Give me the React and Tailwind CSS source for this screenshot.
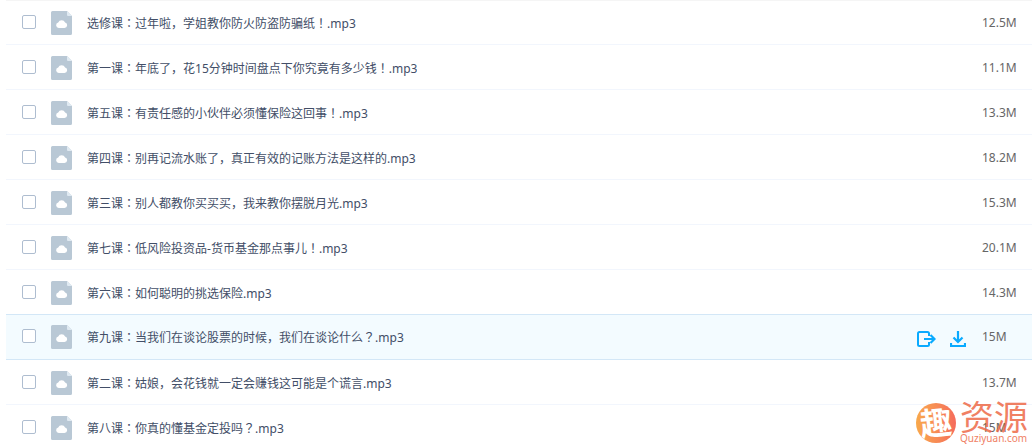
import React, { useState } from "react";

const files = [
  { name: "选修课：过年啦，学姐教你防火防盗防骗纸！.mp3", size: "12.5M" },
  { name: "第一课：年底了，花15分钟时间盘点下你究竟有多少钱！.mp3", size: "11.1M" },
  { name: "第五课：有责任感的小伙伴必须懂保险这回事！.mp3", size: "13.3M" },
  { name: "第四课：别再记流水账了，真正有效的记账方法是这样的.mp3", size: "18.2M" },
  { name: "第三课：别人都教你买买买，我来教你摆脱月光.mp3", size: "15.3M" },
  { name: "第七课：低风险投资品-货币基金那点事儿！.mp3", size: "20.1M" },
  { name: "第六课：如何聪明的挑选保险.mp3", size: "14.3M" },
  { name: "第九课：当我们在谈论股票的时候，我们在谈论什么？.mp3", size: "15M", active: true },
  { name: "第二课：姑娘，会花钱就一定会赚钱这可能是个谎言.mp3", size: "13.7M" },
  { name: "第八课：你真的懂基金定投吗？.mp3", size: "15M" },
];

const FileIcon = () => (
  <svg className="w-[21px] h-6 mt-0.5 shrink-0" viewBox="0 0 21 24" aria-hidden="true">
    <path d="M1.500 0H16l5 5v17.500a1.500 1.500 0 0 1-1.500 1.500h-18A1.500 1.500 0 0 1 0 22.500v-21A1.500 1.500 0 0 1 1.500 0z" fill="#b9c8d5" />
    <path d="M16 0l5 5h-4a1 1 0 0 1-1-1z" fill="#e0eaf2" />
    <path d="M7.800 17a2.800 2.800 0 0 1-.6-5.500 3.700 3.700 0 0 1 6.900 0 2.800 2.800 0 0 1-.6 5.500z" fill="#fff" />
  </svg>
);

const ShareIcon = () => (
  <svg className="w-[19px] h-[17px]" viewBox="0 0 19 17" fill="none" stroke="#09aaff" strokeWidth="2" aria-hidden="true">
    <path d="M12 5V2.500A1.500 1.500 0 0 0 10.500 1h-8A1.500 1.500 0 0 0 1 2.500v11A1.500 1.500 0 0 0 2.500 15h8a1.500 1.500 0 0 0 1.500-1.500V11" />
    <path d="M7 8H17M13.500 4l4 4-4 4" strokeWidth="2.200" />
  </svg>
);

const DownloadIcon = () => (
  <svg className="w-4 h-[17px]" viewBox="0 0 16 17" fill="none" stroke="#09aaff" strokeWidth="2" aria-hidden="true">
    <path d="M8 0v10M3.500 6.500L8 11l4.500-4.500M1 12v3h14v-3" strokeWidth="2.200" />
  </svg>
);

// full-width marks sit in the middle of their cell in the JP face
const FileName = ({ name }) => (
  <span className="truncate mt-0.5 text-[#424e67]">
    {name.split(/([：！？])/).map((part, i) =>
      /[：！？]/.test(part) ? (
        <span key={i} className="font-['Noto_Sans_CJK_JP',sans-serif]">
          {part}
        </span>
      ) : (
        part
      )
    )}
  </span>
);

const FileRow = ({ file }) => {
  const [checked, setChecked] = useState(false);

  return (
    <li
      className={
        file.active
          ? "flex items-center h-[46px] -mt-px pl-4 pb-0.5 border-y border-[#d3e7f7] bg-[#f3fbff]"
          : "flex items-center h-[45px] first:-mt-px pl-4 border-b border-[#f2f6fd]"
      }
    >
      <label className="flex flex-1 min-w-0 items-center gap-[15px]">
        <input
          type="checkbox"
          checked={checked}
          onChange={() => setChecked(!checked)}
          className="appearance-none w-3.5 h-3.5 shrink-0 rounded-xs border border-[#aebdd0] bg-white checked:bg-[#09aaff]"
        />
        <FileIcon />
        <FileName name={file.name} />
      </label>

      {file.active && (
        <div className="flex items-center gap-3.5 pt-1.5 pr-4">
          <button type="button" aria-label="分享">
            <ShareIcon />
          </button>
          <button type="button" aria-label="下载">
            <DownloadIcon />
          </button>
        </div>
      )}

      <span className="w-[50px] mt-0.5 shrink-0 text-[#666]">{file.size}</span>
    </li>
  );
};

const Watermark = () => (
  <div className="absolute right-1 bottom-0.5 flex items-center gap-1 pointer-events-none text-[#ee6a48] opacity-85">
    <div className="w-10 h-10 rounded-full bg-gradient-to-r from-[#f79a2b] to-[#f4513f] flex items-center justify-center">
      <span className="text-[32px] leading-10 font-bold text-white -rotate-6">趣</span>
    </div>
    <div className="flex flex-col">
      <span className="text-[34px] leading-[30px]">资源</span>
      <span className="text-[10px] leading-3">Quziyuan.com</span>
    </div>
  </div>
);

const App = () => {
  return (
    <main className="relative h-screen overflow-hidden bg-white pl-1.5 text-xs font-['Noto_Sans','Noto_Sans_CJK_SC',sans-serif]">
      <ul className="border-t border-[#f5f5f5]">
        {files.map((file) => (
          <FileRow key={file.name} file={file} />
        ))}
      </ul>
      <Watermark />
    </main>
  );
};

export default App;
